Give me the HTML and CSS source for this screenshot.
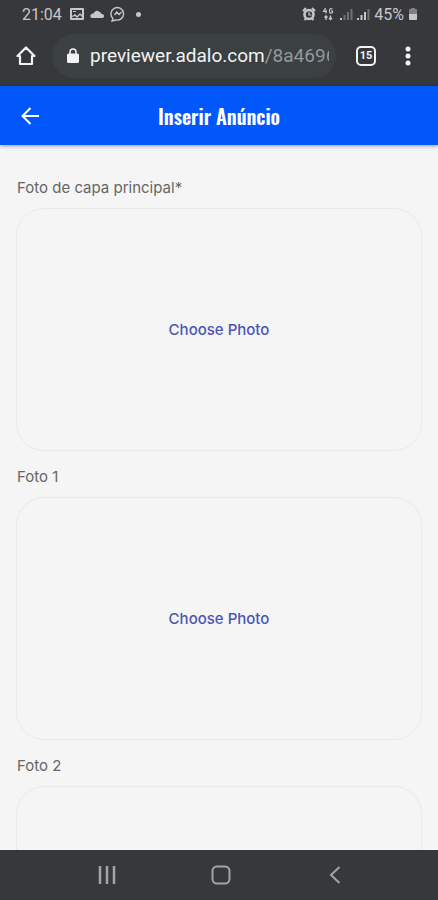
FILE: index.html
```html
<!DOCTYPE html>
<html lang="pt-BR">
<head>
<meta charset="utf-8">
<meta name="viewport" content="width=device-width, initial-scale=1">
<title>Inserir Anúncio</title>
<link rel="stylesheet" href="styles.css">
</head>
<body>
<div class="chrome">
  <div class="status">
    <div class="status-group">
      <span class="clock">21:04</span>
      <svg width="14" height="14" viewBox="0 0 14 14"><path fill="currentColor" fill-rule="evenodd" d="M1 1h12q1 0 1 1v10q0 1-1 1H1q-1 0-1-1V2q0-1 1-1zm1 2v6l3-2 2 2 3-3 2 2V3zM2 11h10v-1L10 8l-3 3-2-2-3 1zM3 4h3v1H3z"/></svg>
      <svg width="14" height="14" viewBox="0 0 14 14"><path fill="currentColor" d="M2 11a2 2 0 0 1-1-3.500Q2 6 3.500 6.500a3.500 3.500 0 0 1 6-1.500q1.500 0 2 2a2 2 0 0 1 1 4z"/></svg>
      <svg width="16" height="16" viewBox="0 0 16 16" fill="none" stroke="currentColor"><path stroke-width="1.400" d="M3 12.500A6.300 6.300 0 1 1 6 14l-4 1z"/><path stroke-width="1.300" d="M4.500 9l2.300-3 2.300 2.500L11.500 6"/></svg>
      <span class="dot"></span>
    </div>
    <div class="status-group status-right">
      <svg width="14" height="14" viewBox="0 0 14 14"><circle cx="7" cy="7.500" r="5.800" fill="currentColor"/><path stroke="currentColor" stroke-width="2" d="M1 4l3-3M13 4l-3-3M2.500 13l2-2M11.500 13l-2-2"/><circle cx="7" cy="7.500" r="3.200" fill="#37383b"/><path d="M7 5v3h2.500" fill="none" stroke="currentColor" stroke-width="1.200"/></svg>
      <svg class="net" width="12" height="14" viewBox="0 0 12 14" fill="none" stroke="currentColor"><path stroke-width="1.200" d="M3.500 1L1.500 4.500h3.500M4 2.500v4M10.500 2q-3-1.500-3 2t3 1.500V4H9"/><path stroke-width="1.400" d="M4 13V9M2.500 10.500L4 9l1.500 1.500M8.500 8.500v4M7 11l1.500 1.500L10 11"/></svg>
      <svg width="13" height="14" viewBox="0 0 13 14" stroke="currentColor" stroke-width="2"><path d="M1 13v-2"/><path opacity=".4" d="M4.500 13V8M8 13V5M11.500 13V2"/></svg>
      <svg width="13" height="14" viewBox="0 0 13 14" stroke="currentColor" stroke-width="2"><path d="M1 13v-2M4.500 13V8M8 13V5"/><path opacity=".4" d="M11.500 13V2"/></svg>
      <span class="battery-text">45%</span>
      <svg width="10" height="14" viewBox="0 0 10 14" fill="currentColor"><path opacity=".5" d="M3 1h4v1h1q1 0 1 1v4H1V3q0-1 1-1h1z"/><path d="M1 7h8v5q0 1-1 1H2q-1 0-1-1z"/></svg>
    </div>
  </div>
  <div class="toolbar">
    <button class="icon-button" aria-label="Home"><svg width="20" height="22" viewBox="0 0 20 22"><path d="M10 2.500L1.500 11H4v8h12v-8h2.500z" fill="none" stroke="currentColor" stroke-width="2.200" stroke-linejoin="round"/></svg></button>
    <button class="address">
      <svg width="12" height="16" viewBox="0 0 12 16"><rect x="0" y="5.500" width="12" height="9.500" rx="1.500" fill="currentColor"/><path d="M3 6V4a3 3 0 0 1 6 0v2" fill="none" stroke="currentColor" stroke-width="1.500"/></svg>
      <span class="url">previewer.adalo.com<span class="path">/8a4696</span></span>
    </button>
    <button class="icon-button tabs" aria-label="Tabs"><span class="tab-count">15</span></button>
    <button class="icon-button" aria-label="Menu"><svg width="6" height="20" viewBox="0 0 6 20" fill="currentColor"><circle cx="3" cy="3" r="2.500"/><circle cx="3" cy="10" r="2.500"/><circle cx="3" cy="17" r="2.500"/></svg></button>
  </div>
</div>
<header class="app-bar">
  <button class="icon-button" aria-label="Voltar"><svg width="20" height="20" viewBox="0 0 20 20" fill="none" stroke="currentColor" stroke-width="2"><path d="M19 10H3M10.500 2L2.500 10l8 8"/></svg></button>
  <h1>Inserir Anúncio</h1>
</header>
<main>
  <div class="field"><label for="cover">Foto de capa principal*</label><button class="picker" id="cover">Choose Photo</button></div>
  <div class="field"><label for="photo1">Foto 1</label><button class="picker" id="photo1">Choose Photo</button></div>
  <div class="field"><label for="photo2">Foto 2</label><button class="picker" id="photo2"></button></div>
</main>
<nav>
  <button aria-label="Recents"><svg width="20" height="20" viewBox="0 0 20 20" stroke="currentColor" stroke-width="2.500"><path d="M3 1v18M10 1v18M17 1v18"/></svg></button>
  <button aria-label="Home screen"><svg width="20" height="20" viewBox="0 0 20 20"><rect x="1.500" y="1.500" width="17" height="17" rx="4.500" fill="none" stroke="currentColor" stroke-width="2"/></svg></button>
  <button aria-label="Back"><svg width="20" height="20" viewBox="0 0 20 20" fill="none" stroke="currentColor" stroke-width="2"><path d="M14.500 2L6 10l8.500 8"/></svg></button>
</nav>
</body>
</html>
```
FILE: styles.css
```css
* { box-sizing: border-box; }
body {
  margin: 0;
  height: 100vh;
  display: flex;
  flex-direction: column;
  overflow: hidden;
  background: #f5f5f5;
  font-family: Roboto, "Liberation Sans", sans-serif;
}
button {
  border: 0;
  padding: 0;
  background: none;
  color: inherit;
  font: inherit;
}
svg { display: block; flex: none; }
.chrome { background: #37383b; color: #f1f2f3; flex: none; }
.status {
  display: flex;
  justify-content: space-between;
  height: 28px;
  padding: 0 20px 0 22px;
  color: #c6c7c9;
  font-size: 16px;
}
.status-group { display: flex; align-items: center; gap: 6px; }
.status-right { gap: 4px; }
.clock { margin-right: 2px; }
.net { margin: 0 2px; }
.dot { width: 5px; height: 5px; margin-left: 4px; border-radius: 50%; background: currentColor; }
.toolbar {
  display: flex;
  align-items: center;
  height: 58px;
  padding: 0 14px 2px 10px;
}
.icon-button {
  display: flex;
  align-items: center;
  justify-content: center;
  flex: none;
  width: 32px;
  height: 40px;
}
.address {
  display: flex;
  align-items: center;
  gap: 11px;
  flex: 1;
  min-width: 0;
  height: 44px;
  margin: 0 14px 0 10px;
  padding: 0 7px 0 15px;
  border-radius: 22px;
  background: #3b4043;
}
.url {
  flex: 1;
  overflow: hidden;
  white-space: nowrap;
  text-align: left;
  font-size: 19px;
  line-height: 24px;
}
.path { color: #95989a; }
.tabs { margin-right: 10px; }
.tab-count {
  width: 20px;
  height: 20px;
  border: 2px solid currentColor;
  border-radius: 5px;
  font-size: 11px;
  font-weight: 700;
  line-height: 16px;
}
.app-bar {
  display: grid;
  grid-template-columns: 32px 1fr 32px;
  align-items: center;
  flex: none;
  height: 59px;
  padding: 0 14px;
  background: #0157fa;
  color: #fff;
  box-shadow: 0 1px 4px rgba(0, 0, 0, .4);
}
h1 {
  margin: 0;
  text-align: center;
  font: 600 20px/28px Oswald, "Roboto Condensed", "Liberation Sans Narrow", "Liberation Sans", sans-serif;
}
main {
  display: flex;
  flex-direction: column;
  gap: 16px;
  flex: 1;
  min-height: 0;
  padding: 33px 16px 0;
  overflow: hidden;
  font-family: Inter, sans-serif;
}
.field { display: flex; flex-direction: column; gap: 10px; flex: none; }
label { padding-left: 1px; color: #666; font-size: 15px; line-height: 20px; }
.picker {
  height: 243px;
  border: 1px solid #e9e9e9;
  border-radius: 28px;
  color: #4a55b5;
  font-size: 15px;
  font-weight: 500;
}
nav {
  display: flex;
  align-items: center;
  justify-content: space-between;
  flex: none;
  height: 50px;
  padding: 0 93px 0 97px;
  background: #37383b;
  color: #a3a4a6;
}
```
